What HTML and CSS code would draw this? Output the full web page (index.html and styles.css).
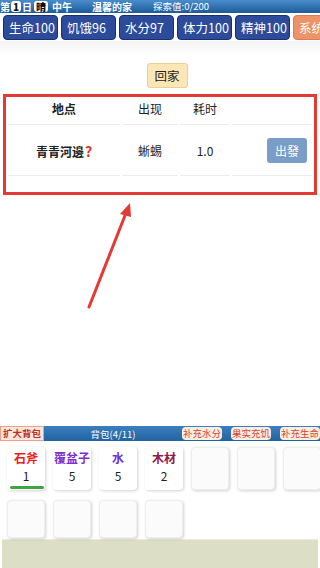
FILE: index.html
```html
<!DOCTYPE html>
<html lang="zh">
<head>
<meta charset="utf-8">
<link rel="stylesheet" href="styles.css">
</head>
<body>
<div class="page">
  <div class="topbar">
    <span class="day">第<b class="chip">1</b>日<b class="chip wide">晴</b><span class="time">中午</span></span>
    <span class="place">温馨的家</span>
    <span class="explore">探索值:0/200</span>
  </div>
  <div class="stats">
    <span class="stat">生命100</span>
    <span class="stat">饥饿96</span>
    <span class="stat">水分97</span>
    <span class="stat">体力100</span>
    <span class="stat">精神100</span>
    <span class="stat sys">系统</span>
  </div>
  <div class="shade"></div>
  <div class="home-row"><span class="home">回家</span></div>
  <div class="panel">
    <table class="places">
      <tr class="head">
        <td class="c1">地点</td><td class="c2">出现</td><td class="c3">耗时</td><td class="c4"></td>
      </tr>
      <tr class="row">
        <td class="c1"><b>青青河邊</b><span class="q">?</span></td>
        <td class="c2">蜥蜴</td>
        <td class="c3">1.0</td>
        <td class="c4"><span class="go">出發</span></td>
      </tr>
    </table>
  </div>
  <div class="spacer"></div>
  <div class="bag-bar">
    <span class="expand">扩大背包</span>
    <span class="bag-title">背包(4/11)</span>
    <span class="act">补充水分</span>
    <span class="act">果实充饥</span>
    <span class="act">补充生命</span>
  </div>
  <div class="grid">
    <div class="card"><b class="nm red">石斧</b><span class="ct">1</span><i class="bar"></i></div>
    <div class="card"><b class="nm purple">覆盆子</b><span class="ct">5</span></div>
    <div class="card"><b class="nm violet">水</b><span class="ct">5</span></div>
    <div class="card"><b class="nm maroon">木材</b><span class="ct">2</span></div>
    <div class="card empty"></div>
    <div class="card empty"></div>
    <div class="card empty"></div>
    <div class="card empty"></div>
    <div class="card empty"></div>
    <div class="card empty"></div>
    <div class="card empty"></div>
  </div>
  <div class="footer"></div>
  <svg class="arrow" width="320" height="568" viewBox="0 0 320 568">
    <line x1="89" y1="307" x2="126" y2="213" stroke="#e53935" stroke-width="3" stroke-linecap="round"/>
    <polygon points="130,203 120,214 131,217" fill="#e53935"/>
  </svg>
</div>
</body>
</html>
```
FILE: styles.css
```css
* { box-sizing: border-box; }
html, body { margin: 0; padding: 0; }
body {
  font-family: "Noto Sans CJK SC", "Noto Sans", sans-serif;
  background: #fff;
  color: #222;
}
.page {
  position: relative;
  width: 320px;
  height: 568px;
  overflow: hidden;
  display: flex;
  flex-direction: column;
}
.topbar {
  height: 13px;
  display: flex;
  align-items: center;
  background: linear-gradient(#4a8ccc, #1d5b98);
  color: #fff;
  font-size: 10px;
  font-weight: bold;
  line-height: 13px;
  white-space: nowrap;
}
.day { display: flex; align-items: center; width: 92px; }
.chip {
  display: inline-block;
  background: #fff;
  color: #111;
  border-radius: 3px;
  padding: 0 2px;
  height: 11px;
  line-height: 11px;
  margin: 0 1px;
}
.chip.wide { padding: 0 2px; margin-left: 2px; }
.time { margin-left: 3px; }
.place { width: 61px; }
.explore { font-weight: normal; font-size: 9.5px; }
.stats {
  display: flex;
  gap: 3px;
  padding: 2px 0 0 3px;
  height: 28px;
  white-space: nowrap;
}
.stat {
  flex: 0 0 55px;
  height: 25px;
  line-height: 23px;
  background: #2d4b9b;
  border: 1px solid #1c2f6e;
  border-radius: 4px;
  color: #fff;
  font-size: 12.5px;
  padding-left: 5px;
}
.sys {
  background: #ec9367;
  border-color: #d87d52;
  flex-basis: 40px;
}
.shade {
  height: 14px;
  background: linear-gradient(#f2f2f2, #fff);
}
.home-row { display: flex; justify-content: center; padding: 8px 0 0 14px; }
.home {
  width: 41px;
  height: 25px;
  line-height: 23px;
  text-align: center;
  background: #fde6b6;
  border: 1px solid #e7cf9d;
  border-radius: 3px;
  font-size: 12.5px;
  color: #222;
}
.panel {
  margin: 6px 3px 0;
  height: 101px;
  border: 3px solid #e53935;
  padding: 2px 0 0 0;
}
.places {
  border-collapse: separate;
  border-spacing: 2px 1px;
  width: 100%;
  font-size: 12px;
}
.places td {
  text-align: center;
  border-bottom: 1px solid #ececec;
  padding: 0;
}
.head td { height: 25px; padding-bottom: 7px; }
.head .c1 { font-weight: bold; }
.row td { height: 50px; }
.c1 { width: 112px; }
.c2 { width: 56px; }
.c3 { width: 50px; }
.q { color: #e53030; font-weight: bold; font-size: 14px; margin-left: 1px; }
.places .c4 { text-align: right; padding-right: 5px; }
.go {
  display: inline-block;
  width: 40px;
  height: 25px;
  line-height: 25px;
  background: #7a9dc8;
  color: #fff;
  border-radius: 3px;
  font-size: 12px;
  text-align: center;
}
.spacer { flex: 1; }
.bag-bar {
  height: 15px;
  display: flex;
  align-items: center;
  background: linear-gradient(#3b7fc0, #2263a0);
  font-size: 9.5px;
  white-space: nowrap;
}
.expand {
  height: 15px;
  line-height: 13px;
  background: #fde6dc;
  border: 1px solid #eba18e;
  color: #b8322a;
  font-weight: bold;
  padding: 0 2px;
  width: 44px;
}
.bag-title { color: #fff; width: 149px; text-align: center; }
.act {
  height: 13px;
  line-height: 13px;
  background: #fdeee0;
  border-radius: 4px;
  color: #d0453a;
  padding: 0 1px;
  margin-right: 9px;
}
.act:last-child { margin-right: 0; }
.grid {
  display: grid;
  grid-template-columns: repeat(7, 38px);
  grid-template-rows: 43px 38px;
  column-gap: 8px;
  row-gap: 10px;
  padding: 6px 0 0 7px;
  height: 98px;
}
.card {
  background: #fff;
  border-radius: 4px;
  box-shadow: 1px 1px 3px rgba(0,0,0,0.18);
  display: flex;
  flex-direction: column;
  align-items: center;
  position: relative;
}
.card.empty { background: #fbfbfb; border: 1px solid #eee; }
.nm { font-size: 12px; line-height: 14px; margin-top: 4px; white-space: nowrap; }
.ct { font-size: 12px; line-height: 14px; margin-top: 4px; color: #222; }
.red { color: #e81e1e; }
.purple { color: #7a2fd0; }
.violet { color: #6a30dc; }
.maroon { color: #8e1a4e; }
.bar {
  position: absolute;
  left: 3px; right: 1px; bottom: 1px;
  height: 3px;
  border-radius: 2px;
  background: #3fa63f;
}
.footer {
  height: 29px;
  margin: 0 2px;
  background: #dcdfc6;
  border-top: 1px solid #e8eadb;
}
.arrow { position: absolute; left: 0; top: 0; pointer-events: none; }
```
